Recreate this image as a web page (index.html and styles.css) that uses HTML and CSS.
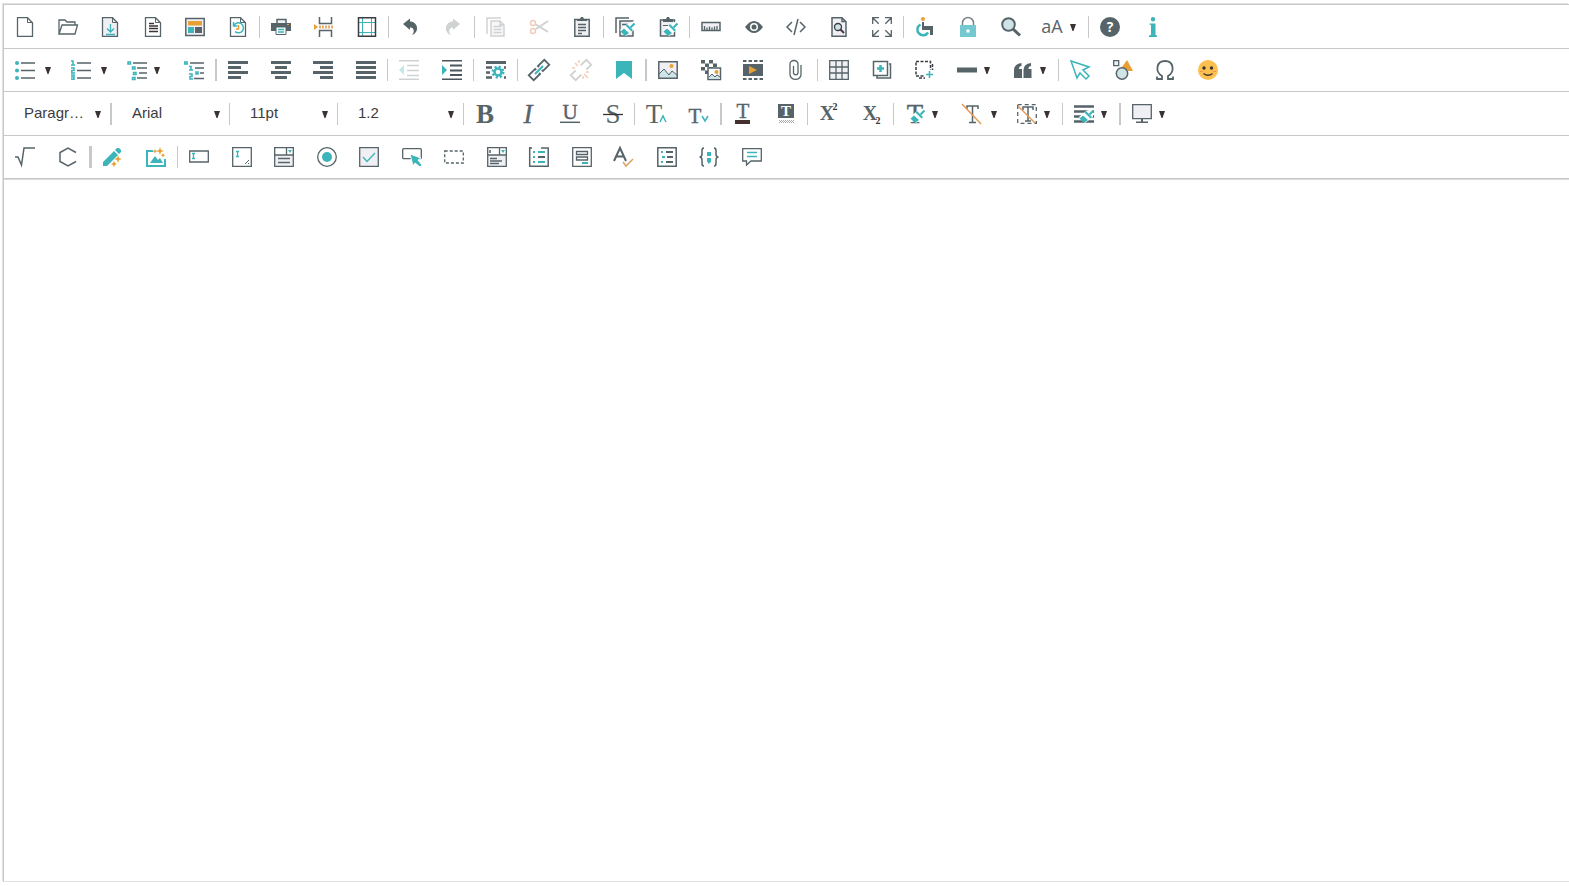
FILE: index.html
```html
<!DOCTYPE html>
<html lang="en">
<head>
<meta charset="utf-8">
<title>Editor</title>
<link rel="stylesheet" href="styles.css">
</head>
<body>
<svg class="defs" aria-hidden="true">
  <symbol id="page" viewBox="0 0 20 20"><path class="w s" stroke-width="1.300" d="M2.500 .7h10l5 5v13.600h-15z"/><path class="s" d="M12.500 .5v5h5"/></symbol>
  <symbol id="brush" viewBox="0 0 20 20"><path class="w" d="M19 4l-7 3-7 6 6 6 8-6z"/><path class="t2" d="M19.500 6.500l-4 4"/><path class="t" d="M12 7l6 6-1.500 1.500-6-6zM9 11.500l5 4.500-4 3-4.500-4.500z"/></symbol>
  <symbol id="caret" viewBox="0 0 6 7"><path d="M0 0h6L3.500 7h-1z" fill="#3b3334"/></symbol>
</svg>
<div class="editor">
  <div class="bar" role="toolbar" aria-label="Document">
    <div class="group g6">
      <button aria-label="New"><svg><use href="#page"/></svg></button>
      <button aria-label="Open"><svg viewBox="0 0 20 20"><path class="s" stroke-width="1.300" d="M1 17V3h6l2 2h8v3M1 17L4 8h15.500l-2.500 9z"/></svg></button>
      <button aria-label="Save"><svg viewBox="0 0 20 20"><path class="l s" stroke-width="1.300" d="M2.500 .7h10l5 5v13.600h-15z"/><path class="s" d="M12.500 .5v5h5"/><path class="ts" stroke-width="1.300" d="M10.500 7v8M7 11.500l3.500 3.500 3.500-3.500M6 17.500h9"/></svg></button>
      <button aria-label="Document"><svg viewBox="0 0 20 20"><use href="#page"/><path stroke="#3b3334" stroke-width="1.500" d="M6 6.500h5M6 9h9M6 11.500h9M6 14.500h9"/></svg></button>
      <button aria-label="Template"><svg viewBox="0 0 20 20"><path class="l s" stroke-width="1.500" d="M.8 1.500h18.400v17H.8z"/><path class="o" d="M3 4h14v4.500H3z"/><path class="t" d="M3 10h6v6H3z"/><path class="d" d="M10 10h7v6h-7z"/></svg></button>
      <button aria-label="History"><svg viewBox="0 0 20 20"><use href="#page"/><path class="ts" stroke-width="1.500" d="M6 8.500a5 5 0 1 1 1 6M5.500 5v4h4"/><path stroke="#e8a035" stroke-width="1.500" d="M10.500 8v4H8"/></svg></button>
    </div>
    <span class="sep"></span>
    <div class="group g3">
      <button aria-label="Print"><svg viewBox="0 0 20 20"><path class="l s" stroke-width="1.500" d="M6 2.500h9V8H6z"/><path class="d" d="M0 6h20v8H0z"/><path class="w s" d="M5 10h10v7.500H5z"/><path class="ts" stroke-width="1.500" d="M7 12.500h6M7 15h6"/><path class="o" d="M16 7h2v1h-2z"/></svg></button>
      <button aria-label="Page break"><svg viewBox="0 0 20 20"><path class="s" stroke-width="1.500" d="M5.500 0v6.500h12V0M5.500 20v-6.500h12V20"/><path class="o" d="M0 7l4 3-4 3z"/><path stroke="#eab06f" stroke-width="3" stroke-dasharray="2 1" d="M5 10h14"/></svg></button>
      <button aria-label="Page margins"><svg viewBox="0 0 20 20"><path class="ts" d="M5.500 1v18M14.500 1v18M1 5.500h18M1 15.500h18"/><path stroke="#3b3d42" stroke-width="1.500" d="M1.500 .8h17v18.400h-17z"/></svg></button>
    </div>
    <span class="sep"></span>
    <div class="group g2">
      <button aria-label="Undo"><svg viewBox="0 0 20 20"><path class="d" d="M3 7l7-5.500v3c8 0 10 11 2 13.500 3-3 2-8-2-7.500v2.500z"/></svg></button>
      <button aria-label="Redo"><svg viewBox="0 0 20 20"><path fill="#cfd2d3" d="M17 7l-7-5.500v3c-8 0-10 11-2 13.500-3-3-2-8 2-7.500v2.500z"/></svg></button>
    </div>
    <span class="sep"></span>
    <div class="group g3">
      <button aria-label="Copy"><svg viewBox="0 0 20 20"><path class="gs" stroke-width="1.500" d="M1 17V1h14"/><path class="gs" fill="#f7f7f8" stroke-width="1.500" d="M5 4h9l4 4v11H5zM14 4v4h4M7.500 9.500h8M7.500 12.500h8M7.500 15.500h8"/></svg></button>
      <button aria-label="Cut"><svg viewBox="0 0 20 20"><path class="gs" stroke-width="2" d="M7 12L19 4M7 7.500L19 15"/><g stroke="#f0cdbb" stroke-width="1.500"><circle cx="4" cy="6" r="2.500"/><circle cx="4" cy="14" r="2.500"/></g></svg></button>
      <button aria-label="Paste"><svg viewBox="0 0 20 20"><path class="l s" stroke-width="1.500" d="M2.800 2.500h14.400v16.700H2.800z"/><path class="d" d="M5 4V2h3l1-2h2l1 2h3v2z"/><path class="s" stroke-width="1.300" d="M6 7.500h8M6 10.500h8M6 13.500h8M6 16.500h4"/></svg></button>
    </div>
    <span class="sep"></span>
    <div class="group g2">
      <button aria-label="Copy format"><svg viewBox="0 0 20 20"><path class="s" stroke-width="1.500" d="M1 16V1h13"/><path class="l s" stroke-width="1.500" d="M5 4h13v15H5zM7 7.500h7"/><use href="#brush"/></svg></button>
      <button aria-label="Paste format"><svg viewBox="0 0 20 20"><path class="l s" stroke-width="1.500" d="M2.500 3h14v16h-14z"/><path class="d" d="M5 5V2h3l1-2h2l1 2h3v3z"/><path class="s" d="M5 8.500h7"/><use href="#brush"/></svg></button>
    </div>
    <span class="sep"></span>
    <div class="group g5">
      <button aria-label="Ruler"><svg viewBox="0 0 20 20"><path class="l s" stroke-width="1.500" d="M1 5.500h18v8H1z"/><path class="s" stroke-width="1.300" d="M3.500 13V9M6 13v-2.500M8.500 13V9.500M11 13v-2.500M13.500 13V9.500M16 13V9"/></svg></button>
      <button aria-label="Preview"><svg viewBox="0 0 20 20"><path class="d" d="M1 10q9-12 18 0-9 12-18 0z"/><circle class="w" cx="10" cy="10" r="4"/><circle class="d" cx="10" cy="10" r="2.500"/></svg></button>
      <button aria-label="Source code"><svg viewBox="0 0 20 20"><path class="s" stroke-width="1.500" d="M6 5L1 10l5 5M14 5l5 5-5 5M12 2L8 18"/></svg></button>
      <button aria-label="Find in document"><svg viewBox="0 0 20 20"><path class="l s" stroke-width="1.500" d="M3 .8h10l4 4v14.500H3zM13 .5v4h4"/><circle cx="9" cy="10" r="3.500" fill="#cfe4e6" stroke="#3b3d42" stroke-width="1.300"/><path stroke="#3b3d42" stroke-width="2" d="M11 12l4 4"/></svg></button>
      <button aria-label="Full screen"><svg viewBox="0 0 20 20"><path class="s" stroke-width="1.300" d="M.7 7V.7H7M.7.7l6 6M13 .7h6.300V7M19.300.7l-6 6M.7 13v6.300H7M.7 19.300l6-6M13 19.300h6.300V13M19.300 19.300l-6-6"/></svg></button>
    </div>
    <span class="sep"></span>
    <div class="group g3">
      <button aria-label="Accessibility"><svg viewBox="0 0 20 20"><circle class="o" cx="8" cy="2" r="2"/><path class="ts" stroke-width="2.500" d="M5.500 7.500a5.700 5.700 0 1 0 7.500 8"/><path class="d" d="M7 5h2v4h9v9h-3v-5H7z"/></svg></button>
      <button aria-label="Lock"><svg viewBox="0 0 20 20"><path stroke="#7a8488" stroke-width="1.500" d="M4.500 9V6a5.500 5.500 0 0 1 11 0v3"/><path fill="#74c9d1" d="M2 8h16v12H2z"/><path class="w" d="M8.500 12.500h3v3h-3z"/></svg></button>
      <button aria-label="Search"><svg viewBox="0 0 20 20"><circle cx="7.500" cy="7.500" r="6.300" fill="#cfe4e6" stroke="#566469" stroke-width="2"/><path class="s" stroke-width="3" d="M12 12l7 6.500"/></svg></button>
    </div>
    <button class="split" aria-label="Change case"><svg viewBox="0 0 20 20"><text x="9" y="16" class="sans">aA</text></svg><svg class="caret"><use href="#caret"/></svg></button>
    <span class="sep"></span>
    <div class="group g2">
      <button aria-label="Help"><svg viewBox="0 0 20 20"><circle class="d" cx="10" cy="10" r="10"/><text x="10" y="15" class="q">?</text></svg></button>
      <button aria-label="Info"><svg viewBox="0 0 20 20"><path class="t" d="M7.800 2.300a2.200 2.200 0 1 1 4.400 0 2.200 2.200 0 1 1-4.400 0zM6.500 6.500h6V18l1.500.5V20H6v-1.500L8 18V8l-1.500-.5z"/></svg></button>
    </div>
  </div>

  <div class="bar" role="toolbar" aria-label="Paragraph and insert">
    <button class="split loose" aria-label="Bulleted list"><svg viewBox="0 0 20 20"><g class="t"><circle cx="2" cy="3" r="2"/><circle cx="2" cy="10.500" r="2"/><circle cx="2" cy="18" r="2"/></g><path class="s" stroke-width="1.300" d="M6 3h14M6 10.500h14M6 18h14"/></svg><svg class="caret"><use href="#caret"/></svg></button>
    <button class="split loose" aria-label="Numbered list"><svg viewBox="0 0 20 20"><path class="ts" stroke-width="1.500" d="M0 1h2v4M0 5h4M0 8h3v2.500H.8V13H4M0 15h3v4.200H0M0 17h3"/><path class="s" stroke-width="1.300" d="M6 3h14M6 10.500h14M6 18h14"/></svg><svg class="caret"><use href="#caret"/></svg></button>
    <button class="split" aria-label="Multilevel list"><svg viewBox="0 0 20 20"><path class="ts" stroke-width="1.500" d="M1 2h2.500v2H1zM5.500 7H8v2H5.500zM6.500 12.500H9v2H6.500zM5.500 17.500H8v2H5.500z"/><path class="s" stroke-width="1.500" d="M6 3h14M10 8h10M12 13h8M10 18h10"/></svg><svg class="caret"><use href="#caret"/></svg></button>
    <div class="group g1">
      <button aria-label="List properties"><svg viewBox="0 0 20 20"><path class="ts" stroke-width="1.500" d="M.7 2h2.500v2H.7zM5 6.500h2v3M5 10h4M12 12h2v2h-2zM5 14h3v2.500H6V19h3"/><path class="s" stroke-width="1.500" d="M6 3h14M11 8h9M16 13h4M10 18.500h10"/></svg></button>
    </div>
    <span class="sep wide"></span>
    <div class="group g4">
      <button aria-label="Align left"><svg viewBox="0 0 20 20"><path class="s" stroke-width="3" d="M0 2.500h20M0 7.500h13M0 12.500h20M0 17.500h13"/></svg></button>
      <button aria-label="Align center"><svg viewBox="0 0 20 20"><path class="s" stroke-width="3" d="M0 2.500h20M4 7.500h12M0 12.500h20M4 17.500h12"/></svg></button>
      <button aria-label="Align right"><svg viewBox="0 0 20 20"><path class="s" stroke-width="3" d="M0 2.500h20M7 7.500h13M0 12.500h20M7 17.500h13"/></svg></button>
      <button aria-label="Justify"><svg viewBox="0 0 20 20"><path class="s" stroke-width="3" d="M0 2.500h20M0 7.500h20M0 12.500h20M0 17.500h20"/></svg></button>
    </div>
    <span class="sep"></span>
    <div class="group g2">
      <button aria-label="Decrease indent"><svg viewBox="0 0 20 20"><path class="gs" stroke-width="1.500" d="M0 .8h20M8 5.500h12M8 10.500h12M8 15.500h12M0 19.200h20"/><path fill="#c4e7e8" d="M5 5v10L0 10z"/></svg></button>
      <button aria-label="Increase indent"><svg viewBox="0 0 20 20"><path stroke="#4a565b" stroke-width="1.500" d="M0 .8h20M0 19.200h20"/><path stroke="#4a565b" stroke-width="2" d="M8 5.500h12M8 10.500h12M8 15h12"/><path class="t" d="M0 5v10l5-5z"/></svg></button>
    </div>
    <span class="sep"></span>
    <div class="group g1">
      <button aria-label="Paragraph properties"><svg viewBox="0 0 20 20"><path class="s" stroke-width="3" d="M0 2.500h20"/><path class="s" stroke-width="2.500" d="M0 7.500h6M18 7.500h2M0 12.500h4M0 17.500h6M18 17.500h2"/><circle cx="12" cy="12" r="5" stroke="#3bb4ba" stroke-width="3" stroke-dasharray="2 1.930"/><circle class="w" cx="12" cy="12" r="3.500" stroke="#3bb4ba" stroke-width="2.500"/></svg></button>
    </div>
    <span class="sep"></span>
    <div class="group g3 tight">
      <button aria-label="Link"><svg viewBox="0 0 20 20"><g class="s" stroke-width="1.800" transform="rotate(-45 10 10)"><path d="M8 8V6.500H-1v7h9V12M12 8V6.500h9v7h-9V12"/></g><path class="t2" d="M6 14l8-8"/></svg></button>
      <button aria-label="Remove link"><svg viewBox="0 0 20 20"><g class="gs" stroke-width="1.800" transform="rotate(-45 10 10)"><path d="M6 6.500H-1v7h8M13 6.500h8v7h-7"/></g><path stroke="#f5cdb5" stroke-width="1.500" d="M4 3l3 3M8 0v3M1 8h3M13 14l4 4M12 16v3M15 12h3"/></svg></button>
      <button aria-label="Bookmark"><svg viewBox="0 0 20 20"><path class="t" d="M2 1h16v18l-8-6-8 6z"/></svg></button>
    </div>
    <span class="sep wide"></span>
    <div class="group g4">
      <button aria-label="Image"><svg viewBox="0 0 20 20"><path class="l" d="M1 2h18v16H1z"/><path fill="#cfe4e6" d="M1 14l5-5 4 5 3-3 6 4v3H1z"/><path class="s" d="M1 14l5-5 5 6 3-4 5 4"/><path class="s" stroke-width="1.500" d="M.8 1.700h18.400v16.500H.8z"/><circle class="o" cx="13.500" cy="6" r="2"/></svg></button>
      <button aria-label="Background image"><svg viewBox="0 0 20 20"><path class="d" d="M0 0h4v3.500H0zM8 0h4v3.500H8zM4 3.500h4V7H4zM12 3.500h4V7h-4zM0 7h4v3.500H0zM8 7h4v3.500H8zM4 10.500h4V14H4z"/><path class="w s" stroke-width="1.500" d="M7 8h12.500v11.500H7z"/><path fill="#cfe4e6" d="M8 17l3-3 3 2 2-2 3 2v3H8z"/><path class="s" d="M8 17l3-3 3 3 2-2 3 2"/><circle class="o" cx="15.500" cy="12" r="2"/></svg></button>
      <button aria-label="Video"><svg viewBox="0 0 20 20"><path class="d" d="M0 4h20v12H0z"/><path class="s" stroke-width="2" stroke-dasharray="3.500 2" d="M0 1h20M0 19h20"/><path class="o" d="M6 6l8 4-8 4z"/></svg></button>
      <button aria-label="Attachment"><svg viewBox="0 0 20 20"><path class="s" stroke-width="1.300" d="M7.500 6v7a2.300 2.300 0 0 0 4.500 0V4a4 3.500 0 0 0-8 0v10.500a5.500 4.800 0 0 0 11 0V5"/></svg></button>
    </div>
    <span class="sep"></span>
    <div class="group g3">
      <button aria-label="Table"><svg viewBox="0 0 20 20"><path class="l s" stroke-width="1.300" d="M.7.7h18.600v18.600H.7zM7 1v18M13 1v18M1 7h18M1 13h18"/></svg></button>
      <button aria-label="Insert layer"><svg viewBox="0 0 20 20"><path class="s" stroke-width="1.500" d="M1.500 1.500h14v14h-14zM17 4h1.500v14H5v-2"/><path class="ts" stroke-width="2.500" d="M8.500 5v7M5 8.500h7"/></svg></button>
      <button aria-label="Container"><svg viewBox="0 0 20 20"><path stroke="#3b3d42" stroke-width="1.500" stroke-dasharray="3 1.500" d="M1 1.500h14.500V16H1zM17.500 4v6M4 18h7"/><path class="w" d="M10 10h10v10H10z"/><path class="ts" stroke-width="1.500" d="M14.500 11v7M11 14.500h7"/></svg></button>
    </div>
    <button class="split" aria-label="Horizontal line"><svg viewBox="0 0 20 20"><path class="d" d="M0 7.500h20v5H0z"/></svg><svg class="caret"><use href="#caret"/></svg></button>
    <button class="split" aria-label="Quote"><svg viewBox="0 0 20 20"><path class="d" d="M8.500 3v3Q6 6 6 9h3v9H1v-8q0-6 7.500-7zM18 3v3q-2.500 0-2.500 3h3v9h-8v-8q0-6 7.500-7z"/></svg><svg class="caret"><use href="#caret"/></svg></button>
    <span class="sep"></span>
    <div class="group g4">
      <button aria-label="Select"><svg viewBox="0 0 20 20"><path class="ts" stroke-width="1.500" d="M1 1l18 6-6 3 6 6-3 3-6-6-3 5z"/></svg></button>
      <button aria-label="Shapes"><svg viewBox="0 0 20 20"><path class="o" d="M9 7l5-7 6 11h-5z"/><path class="l s" stroke-width="1.300" d="M.7.7h5v5h-5z"/><circle cx="9" cy="13.500" r="5.700" fill="#cfe4e6" stroke="#566469" stroke-width="1.500"/></svg></button>
      <button aria-label="Special character"><svg viewBox="0 0 20 20"><path class="s" stroke-width="1.800" d="M2 16.500V19h5v-3C0 12 1 1 10 1s10 11 3 15v3h5v-2.500"/></svg></button>
      <button aria-label="Emoticon"><svg viewBox="0 0 20 20"><circle cx="10" cy="10" r="10" fill="#fbc04e"/><circle cx="6" cy="8" r="1.700" fill="#3b3334"/><circle cx="13.500" cy="8" r="1.700" fill="#3b3334"/><path stroke="#f0954b" d="M2 11.500h3M15 11.500h3"/><path stroke="#3b3334" stroke-width="1.300" d="M5.500 13.500q4.500 3.500 9 0"/></svg></button>
    </div>
  </div>

  <div class="bar" role="toolbar" aria-label="Text">
    <label class="pick p1"><select aria-label="Paragraph style"><option>Paragr…</option></select><svg class="caret"><use href="#caret"/></svg></label>
    <span class="sep wide"></span>
    <label class="pick p2"><select aria-label="Font"><option>Arial</option></select><svg class="caret"><use href="#caret"/></svg></label>
    <span class="sep"></span>
    <label class="pick p3"><select aria-label="Font size"><option>11pt</option></select><svg class="caret"><use href="#caret"/></svg></label>
    <span class="sep"></span>
    <label class="pick p4"><select aria-label="Line height"><option>1.2</option></select><svg class="caret"><use href="#caret"/></svg></label>
    <span class="sep"></span>
    <div class="group g4">
      <button aria-label="Bold"><svg viewBox="0 0 20 20"><text x="10" y="19" class="serif bold f27">B</text></svg></button>
      <button aria-label="Italic"><svg viewBox="0 0 20 20"><text x="10" y="19" class="serif italic thick-text f27">I</text></svg></button>
      <button aria-label="Underline"><svg viewBox="0 0 20 20"><text x="10" y="15" class="serif thick-text f21">U</text><path class="s" stroke-width="1.500" d="M0 18.300h20"/></svg></button>
      <button aria-label="Strikethrough"><svg viewBox="0 0 20 20"><text x="10" y="19" class="serif f27">S</text><path stroke="#3b3334" stroke-width="1.300" d="M0 10.500h20"/></svg></button>
    </div>
    <span class="sep"></span>
    <div class="group g2">
      <button aria-label="Increase font size"><svg viewBox="0 0 20 20"><text x="8" y="19" class="serif f27">T</text><path class="ts" stroke-width="1.500" d="M14 18l3-6 3 6"/></svg></button>
      <button aria-label="Decrease font size"><svg viewBox="0 0 20 20"><text x="6" y="19" class="serif thick-text f21">T</text><path class="ts" stroke-width="1.500" d="M13 12l3 5 3-5"/></svg></button>
    </div>
    <span class="sep wide"></span>
    <div class="group g2">
      <button aria-label="Text color"><svg viewBox="0 0 20 20"><text x="10" y="14" class="serif thick-text f21">T</text><path fill="#43302f" d="M2 16h15v4H2z"/></svg></button>
      <button aria-label="Text background"><svg viewBox="0 0 20 20"><path class="d" d="M2 0h16v14H2z"/><text x="10" y="12" class="serif bold white f15">T</text><path stroke="#aaa" stroke-width="1" stroke-dasharray="1 1" d="M3 16.500h15M4 17.500h14M3 18.500h15"/></svg></button>
    </div>
    <span class="sep"></span>
    <div class="group g2">
      <button aria-label="Superscript"><svg viewBox="0 0 20 20"><text x="8" y="16" class="serif bold f20">X</text><text x="16" y="6" class="serif bold dark f10">2</text></svg></button>
      <button aria-label="Subscript"><svg viewBox="0 0 20 20"><text x="8" y="16" class="serif bold f20">X</text><text x="16" y="20" class="serif bold dark f10">2</text></svg></button>
    </div>
    <span class="sep"></span>
    <button class="split" aria-label="Format painter"><svg viewBox="0 0 20 20"><text x="10" y="19" class="serif thick-text f27">T</text><use href="#brush"/></svg><svg class="caret"><use href="#caret"/></svg></button>
    <button class="split loose" aria-label="Remove format"><svg viewBox="0 0 20 20"><path class="s" stroke-width="1.500" d="M6 5V2h11v3M11.500 2v16M8 18.500h7"/><path stroke="#e59a55" stroke-width="1.500" d="M1 0l19 20"/></svg><svg class="caret"><use href="#caret"/></svg></button>
    <button class="split" aria-label="Remove all formats"><svg viewBox="0 0 20 20"><path class="s" stroke-width="1.500" d="M6 6V3h10v3M11 3v14M8 17h6"/><path class="s" stroke-width="1.300" stroke-dasharray="4 3" d="M.7.7h18.600v18.600H.7z"/><path stroke="#e59a55" stroke-width="1.500" d="M1 2l17 17"/></svg><svg class="caret"><use href="#caret"/></svg></button>
    <span class="sep"></span>
    <button class="split" aria-label="Paragraph format"><svg viewBox="0 0 20 20"><path class="s" stroke-width="2.500" d="M0 2.500h20M0 7.500h20M0 12.500h20M0 17.500h20"/><use href="#brush"/></svg><svg class="caret"><use href="#caret"/></svg></button>
    <span class="sep wide"></span>
    <button class="split" aria-label="Screen"><svg viewBox="0 0 20 20"><path class="l s" stroke-width="1.300" d="M.7.7h18.600v14H.7z"/><path class="d" d="M9 15h2v2.500h5V19H4v-1.500h5z"/></svg><svg class="caret"><use href="#caret"/></svg></button>
  </div>

  <div class="bar" role="toolbar" aria-label="Forms and tools">
    <div class="group g2">
      <button aria-label="Math equation"><svg viewBox="0 0 20 20"><path class="s" stroke-width="1.500" d="M0 10h3l3.500 8L9 1h11"/></svg></button>
      <button aria-label="Chemical formula"><svg viewBox="0 0 20 20"><path class="s" stroke-width="1.500" d="M18 5.500L10 1 2 5.500v9L10 19l8-4.500"/></svg></button>
    </div>
    <span class="sep thick"></span>
    <div class="group g2">
      <button aria-label="AI writing"><svg viewBox="0 0 20 20"><path class="t" d="M0 15L11 4l4 4L4 19H0zM12 3l2-2h2l2 2v2l-2 2z"/><path class="o" d="M15 8l1 3 3 1-3 1-1 3-1-3-3-1 3-1zM11 14l1 2 2 1-2 1-1 2-1-2-2-1 2-1z"/></svg></button>
      <button aria-label="AI image"><svg viewBox="0 0 20 20"><path class="t2" d="M7 4H1v15h18v-7"/><path class="t" d="M4 16l5-7 3 4 2-2 3 5z"/><path class="o" d="M14 0l1 3 3 1-3 1-1 3-1-3-3-1 3-1zM9 2l.7 1.500 1.500.7-1.500.7L9 6.500l-.7-1.600-1.500-.7 1.500-.7zM17 6l.7 1.500 1.500.7-1.500.7-.7 1.600-.7-1.600-1.500-.7 1.500-.7z"/></svg></button>
    </div>
    <span class="sep"></span>
    <div class="group g14">
      <button aria-label="Text field"><svg viewBox="0 0 20 20"><path class="w s" stroke-width="1.300" d="M.7 4h18.600v11H.7z"/><path class="ts" stroke-width="1.300" d="M3 6.500h3M4.500 6.500v5M3 11.500h3"/></svg></button>
      <button aria-label="Text area"><svg viewBox="0 0 20 20"><path class="w s" stroke-width="1.300" d="M.7.7h18.600v18.600H.7z"/><path class="ts" stroke-width="1.300" d="M4 4.500h3M5.500 4.500v5M4 9.500h3"/><path class="s" d="M13 17l4-4M16 17l1-1"/></svg></button>
      <button aria-label="Drop-down list"><svg viewBox="0 0 20 20"><path class="l s" stroke-width="1.300" d="M.7.7h18.600v18.600H.7z"/><path class="w s" stroke-width="1.300" d="M.7.7h18.600V8H.7zM12.500 1v7"/><path class="t" d="M14 3h4l-2 3z"/><path class="s" stroke-width="1.300" d="M4 11.500h12M4 15.500h12"/></svg></button>
      <button aria-label="Radio button"><svg viewBox="0 0 20 20"><circle class="s" stroke-width="1.300" cx="10" cy="10" r="9.300"/><circle class="t" cx="10" cy="10" r="5"/></svg></button>
      <button aria-label="Check box"><svg viewBox="0 0 20 20"><path class="l s" stroke-width="1.300" d="M.7.7h18.600v18.600H.7z"/><path class="ts" stroke-width="1.300" d="M4 10l4 4.500L16 6"/></svg></button>
      <button aria-label="Button"><svg viewBox="0 0 20 20"><rect class="s" stroke-width="1.300" x=".7" y="1.700" width="18.600" height="10" rx="1"/><path fill="#3bb4ba" stroke="#fff" d="M8 7l11 4-3 2 4 5-2 2-5-4-2 3z"/></svg></button>
      <button aria-label="Hidden field"><svg viewBox="0 0 20 20"><path class="s" stroke-width="1.300" stroke-dasharray="3 2" d="M.7 4h18.600v12H.7z"/></svg></button>
      <button aria-label="List box"><svg viewBox="0 0 20 20"><path class="l s" stroke-width="1.300" d="M.7.7h18.600v18.600H.7z"/><path class="w s" stroke-width="1.300" d="M.7.7h18.600V8H.7zM12.500 1v7"/><path class="t" d="M14 3h4l-2 3z"/><path class="s" stroke-width="1.500" d="M3 3v3M3 11.500h7M3 14h12M3 16.500h9"/></svg></button>
      <button aria-label="Form list"><svg viewBox="0 0 20 20"><path class="s" stroke-width="1.500" d="M.7 0v19.200h18.500V1H12M.7 1H3"/><path class="t2" d="M4 5h2M9 5h7M4 10h2M4 15h2M9 15h7"/><path class="s2" d="M9 10h7"/></svg></button>
      <button aria-label="Form"><svg viewBox="0 0 20 20"><path class="s" stroke-width="1.300" d="M.7.7h18.600v18.600H.7zM4.500 4.500h11V7.500h-11zM4.500 10h11v3h-11z"/><path class="t" d="M10 15h6v2h-6z"/></svg></button>
      <button aria-label="Spell check"><svg viewBox="0 0 20 20"><path class="s2" d="M0 14L6 1l6 13M2.500 9.500h7"/><path stroke="#dfa160" stroke-width="1.500" d="M9 15l3 4 7-7"/></svg></button>
      <button aria-label="Outline"><svg viewBox="0 0 20 20"><path class="s" stroke-width="1.500" d="M.8.8h18.400v18.400H.8z"/><path class="t2" d="M4 5h2M5 10h3M4 15h2"/><path class="s2" d="M9 5h7M10 10h6M9 15h7"/></svg></button>
      <button aria-label="Code snippet"><svg viewBox="0 0 20 20"><path class="s" stroke-width="1.500" d="M5 1Q3 1 3 3.500V7q0 3-2.500 3Q3 10 3 13v3.500Q3 19 5 19M15 1q2 0 2 2.500V7q0 3 2.500 3-2.500 0-2.500 3v3.500q0 2.500-2 2.500"/><path class="t" d="M8 5h4v4H8zM8 11h4v4l-3 2v-2H8z"/></svg></button>
      <button aria-label="Comment"><svg viewBox="0 0 20 20"><path class="s" stroke-width="1.300" d="M.7 1.700h18.600V14H9l-4.500 4v-4H.7z"/><path class="ts" stroke-width="1.300" d="M5 5.500h10M5 9.500h10"/></svg></button>
    </div>
  </div>
  <div class="page" contenteditable="true" role="textbox" aria-label="Document content" aria-multiline="true"></div>
</div>
</body>
</html>
```
FILE: styles.css
```css
* { box-sizing: border-box; }

body {
  margin: 0;
  background: #fff;
  font-family: "Liberation Sans", Arial, sans-serif;
}

.defs { position: absolute; width: 0; height: 0; }

.editor {
  display: flex;
  flex-direction: column;
  height: calc(100vh - 4px);
  border: 1px solid #c8c8c8;
  border-right: 0;
  border-bottom-color: #e2e2e2;
  box-shadow: -1px -1px 0 #e2e2e2;
  overflow: hidden;
}
body { padding: 4px 0 0 3px; height: 100vh; box-sizing: border-box; }
.editor { height: calc(100vh - 8px); }

.bar {
  display: flex;
  align-items: center;
  padding: 11px 0;
  border-bottom: 1px solid #c8c8c8;
}
.bar:nth-child(odd) { padding-top: 12px; }
.bar:nth-child(4) { box-shadow: 0 1px 0 #dcdcdc; }

.page { flex: 1; outline: none; }

.group { display: flex; flex: none; }
.group button { flex: 1; }
.g1 { width: 43px; }
.g2 { width: 85px; }
.g3 { width: 128px; }
.g3.tight { width: 127px; }
.g4 { width: 170px; }
.g5 { width: 213px; }
.g6 { width: 255px; }
.g14 { width: 595px; }

button {
  display: flex;
  align-items: center;
  justify-content: center;
  height: 20px;
  padding: 0;
  border: 0;
  background: none;
}

.split {
  flex: none;
  justify-content: flex-start;
  gap: 7px;
  width: 56px;
  padding-left: 11px;
}
.split.loose { gap: 10px; }

.sep {
  flex: none;
  width: 1px;
  height: 22px;
  margin: -1px 0;
  background: #c8c8c8;
}
.sep.wide { width: 2px; }
.sep.thick { width: 3px; }

svg { flex: none; width: 20px; height: 20px; fill: none; overflow: visible; }
.caret { width: 6px; height: 7px; }

.pick {
  display: flex;
  flex: none;
  align-items: center;
  height: 20px;
  padding: 0 9px 0 20px;
}
.pick select {
  flex: 1;
  min-width: 0;
  height: 20px;
  padding: 0 0 2px;
  border: 0;
  appearance: none;
  background: none;
  color: #3c3c3c;
  font: 15px/18px "Liberation Sans", Arial, sans-serif;
}
.p1 { width: 106px; }
.p2 { width: 117px; }
.p3 { width: 107px; }
.p4 { width: 125px; }

.d { fill: #566469; }
.t { fill: #3bb4ba; }
.o { fill: #e8a035; }
.l { fill: #f0eff3; }
.w { fill: #fff; }
.s, .s2 { stroke: #566469; }
.ts, .t2 { stroke: #3bb4ba; }
.gs { stroke: #cfd2d3; }
.s2, .t2 { stroke-width: 2px; }

text { fill: #566469; text-anchor: middle; }
.sans { font: 18px "Open Sans", sans-serif; }
.q { font: bold 14px "Open Sans", sans-serif; fill: #fff; }
.serif { font-family: "Liberation Serif", serif; }
.bold { font-weight: bold; }
.italic { font-style: italic; }
.thick-text { stroke: #566469; stroke-width: 0.4px; }
.white { fill: #fff; }
.dark { fill: #3b3334; }
.f27 { font-size: 27px; }
.f21 { font-size: 21px; }
.f20 { font-size: 20px; }
.f15 { font-size: 15px; }
.f10 { font-size: 10px; }
```
